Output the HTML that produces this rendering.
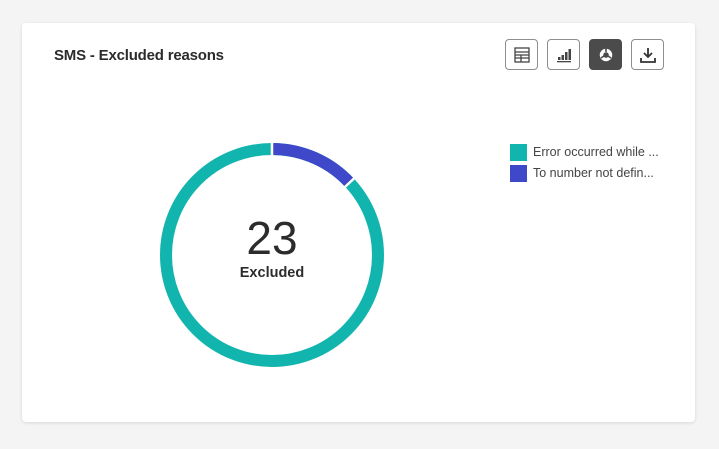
<!DOCTYPE html><html><head><style>
body{margin:0;width:719px;height:449px;background:#f4f4f4;font-family:"Liberation Sans",sans-serif;position:relative;overflow:hidden}
.card{position:absolute;left:22px;top:23px;width:673px;height:399px;background:#fff;border-radius:4px;box-shadow:0 1px 3px rgba(0,0,0,.12)}
.t{position:absolute;left:54px;top:47px;font-size:15px;font-weight:bold;color:#2c2c2c;letter-spacing:-0.2px}
.b{position:absolute;top:39px;width:31px;height:29px;border:1px solid #8e8e8e;border-radius:4px;background:#fff}
.b svg{position:absolute;left:7px;top:6px}
.lg{position:absolute;left:510px;font-size:12.5px;color:#444}
.lg i{display:inline-block;width:17px;height:17px;vertical-align:middle;margin-right:6px}
</style></head><body>
<div class="card"></div>
<div class="t">SMS - Excluded reasons</div>
<div class="b" style="left:505px"><svg width="18" height="18"><g stroke="#444" fill="none" stroke-width="1.3"><rect x="2" y="2" width="14" height="14"/><path d="M2 6H16M2 9H16M2 12H16M8 9V16"/></g></svg></div>
<div class="b" style="left:547px"><svg width="18" height="18"><g fill="#444"><rect x="2" y="15" width="14" height="1.3"/><rect x="3" y="11" width="2.5" height="3"/><rect x="6.5" y="9" width="2.5" height="5"/><rect x="10" y="6" width="2.5" height="8"/><rect x="13.5" y="3" width="2.5" height="11"/></g></svg></div>
<div class="b" style="left:589px;background:#4b4b4b;border-color:#4b4b4b"><svg width="18" height="18"><circle cx="9" cy="9" r="4.5" fill="none" stroke="#fff" stroke-width="3.5"/><path d="M9 2V6M14 12L11 10M4 12L7 10" stroke="#4b4b4b" stroke-width="1.6"/></svg></div>
<div class="b" style="left:631px"><svg width="18" height="18"><g stroke="#333" fill="none" stroke-width="1.8"><path d="M9 2V11M5 7L9 11L13 7M2 12V16H16V12"/></g></svg></div>
<svg style="position:absolute;left:0;top:0" width="719" height="449">
<circle cx="272" cy="255" r="106" fill="none" stroke="#12b5ae" stroke-width="12"/>
<circle cx="272" cy="255" r="106" fill="none" stroke="#3f48c8" stroke-width="12" stroke-dasharray="86.9 600" transform="rotate(-90 272 255)"/>
<path d="M272 142V156M344.4 187.5L354.6 177.9" stroke="#fff" stroke-width="2.5"/>
<text x="272" y="254" text-anchor="middle" font-size="46" fill="#2c2c2c" font-family="Liberation Sans">23</text>
<text x="272" y="277" text-anchor="middle" font-size="14.5" font-weight="bold" fill="#2c2c2c" font-family="Liberation Sans">Excluded</text>
</svg>
<div class="lg" style="top:144px"><i style="background:#12b5ae"></i>Error occurred while ...</div>
<div class="lg" style="top:165px"><i style="background:#3f48c8"></i>To number not defin...</div>
</body></html>
